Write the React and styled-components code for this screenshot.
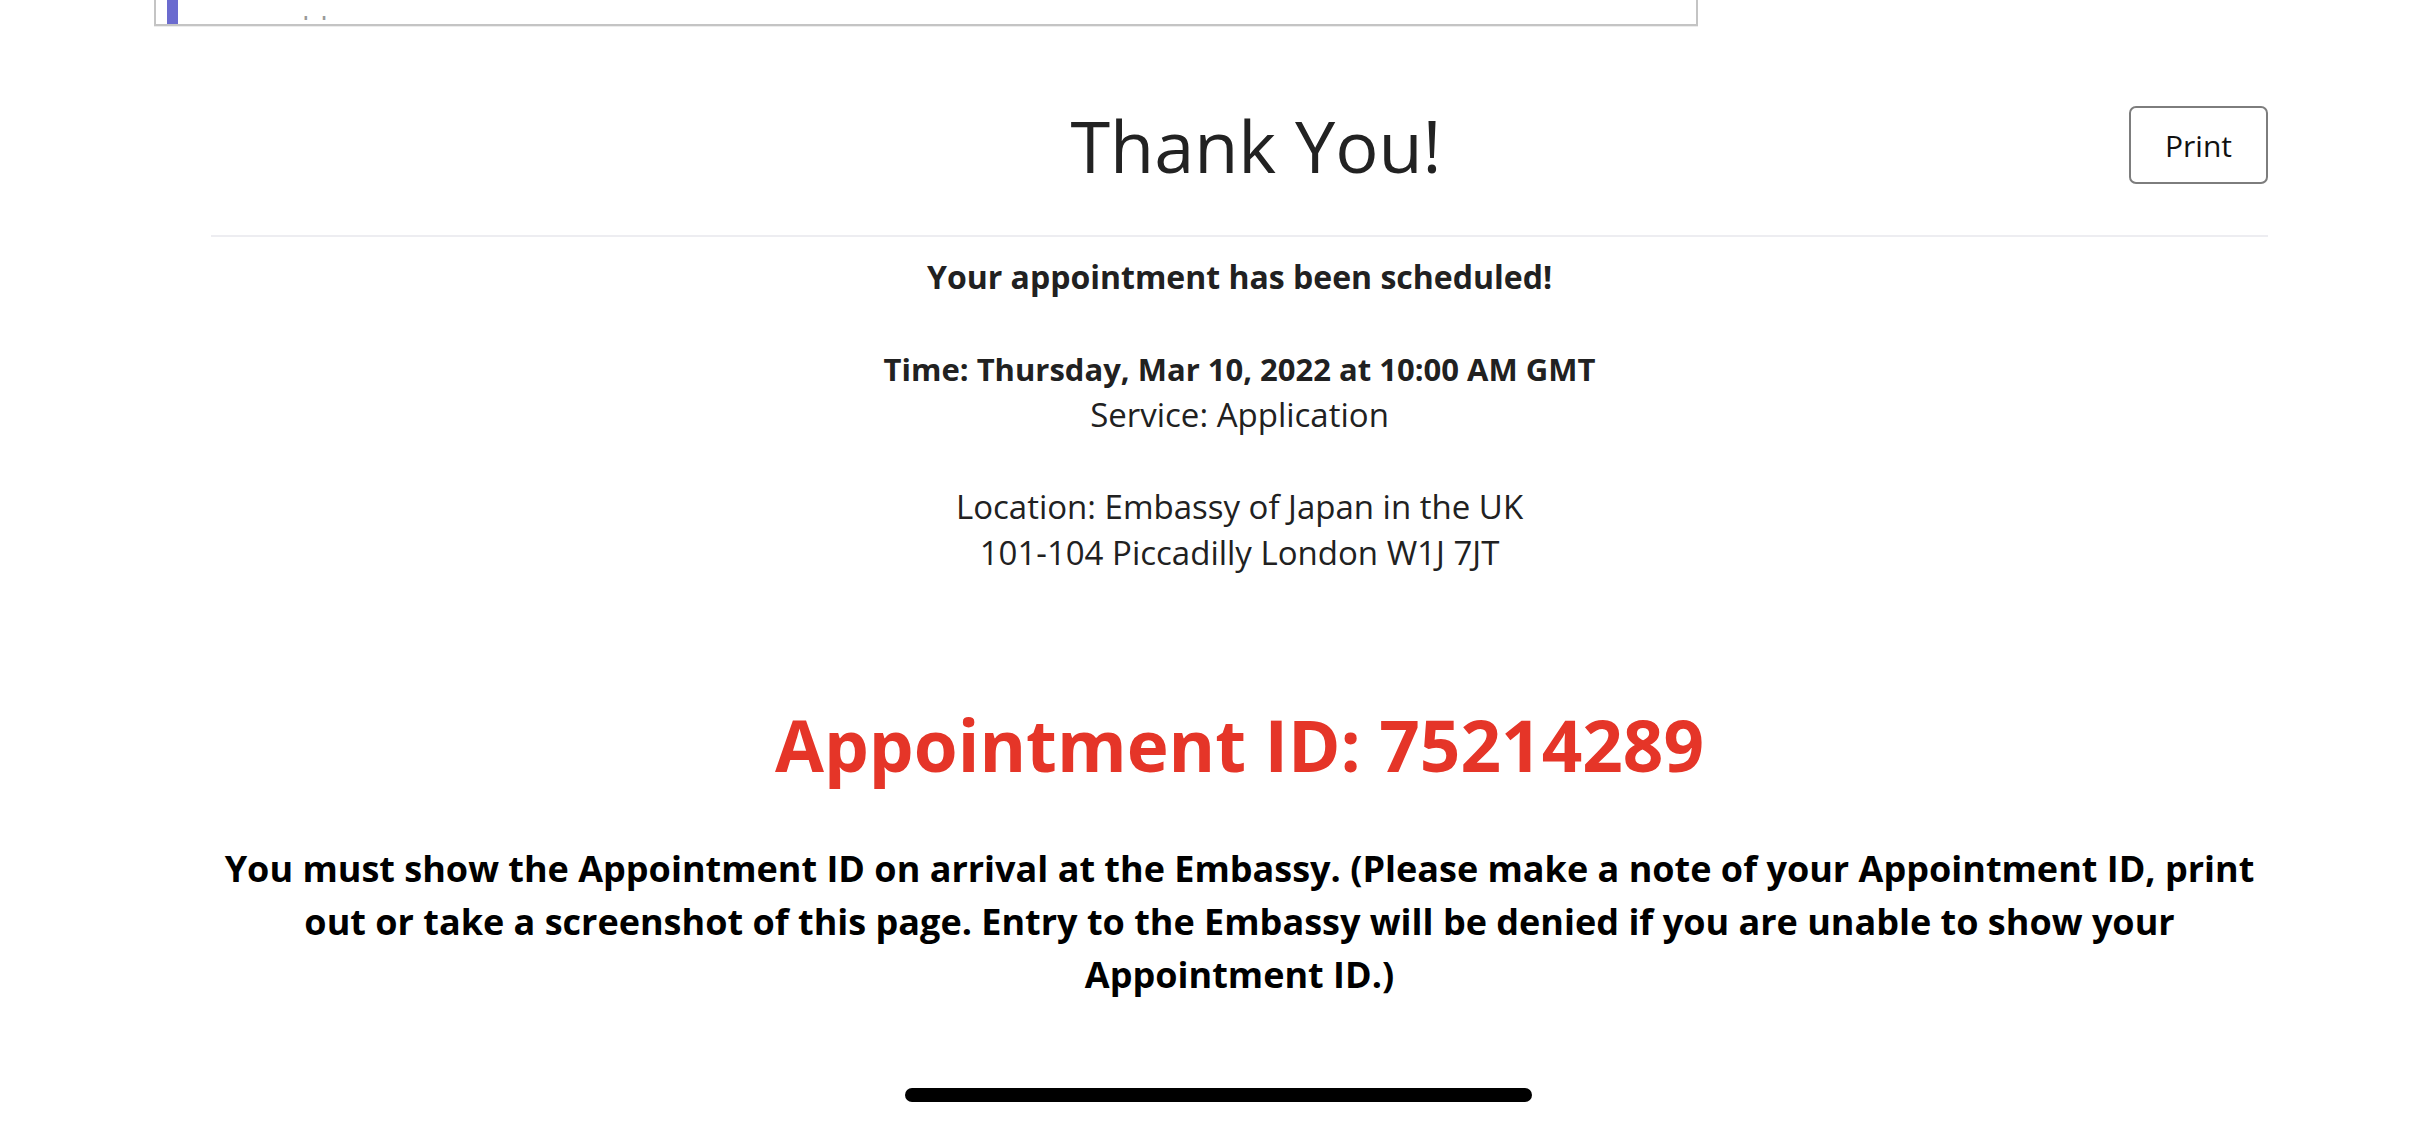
import { styled, createGlobalStyle } from "styled-components";

const GlobalStyle = createGlobalStyle`
    html, body {
        margin: 0;
        padding: 0;
        background: #ffffff;
        font-family: "Open Sans", "Noto Sans", sans-serif;
        color: #212121;
    }
`;

const Page = styled.div`
    position: relative;
    min-height: 1125px;
    overflow: hidden;
`;

const PrevCard = styled.div`
    display: flex;
    width: 1544px;
    height: 160px;
    margin: -134px 0 0 154px;
    box-sizing: border-box;
    border: 2px solid #c4c4c4;
    border-top: none;
    box-shadow: 0 1px 0 #ececec;
    padding-left: 11px;
`;

const AccentBar = styled.div`
    width: 11px;
    background: #6b6bcf;
`;

const PrevLabel = styled.div`
    align-self: flex-end;
    margin: 0 0 4px 105px;
    font-size: 30px;
    line-height: 30px;
    height: 4px;
    overflow: hidden;
    color: #9a9a9a;
    display: flex;
    align-items: flex-end;
`;

const Content = styled.main`
    margin-left: 211px;
    width: 2057px;
`;

const Header = styled.header`
    display: grid;
    grid-template-columns: 1fr auto 1fr;
    align-items: center;
    padding-top: 76px;
    padding-bottom: 47px;
    border-bottom: 2px solid #ededf1;
`;

const Title = styled.h1`
    grid-column: 2;
    margin: 0;
    padding-left: 33px;
    font-size: 72px;
    font-weight: 400;
    line-height: 1.2;
    color: #222222;
`;

const PrintButton = styled.button`
    grid-column: 3;
    justify-self: end;
    width: 139px;
    height: 78px;
    border: 2px solid #7d7d7d;
    border-radius: 7px;
    background: #ffffff;
    font-family: "Open Sans", sans-serif;
    font-size: 30px;
    color: #111111;
    cursor: pointer;
`;

const Details = styled.p`
    margin: 17px 0 0;
    text-align: center;
    font-size: 33px;
    line-height: 46px;
    color: #212121;
`;

const Strong = styled.strong`
    font-size: ${({ $size }) => $size || 32}px;
    font-weight: 700;
`;

const AppointmentId = styled.h2`
    margin: 116px 0 0;
    text-align: center;
    font-size: 71px;
    line-height: 106px;
    font-weight: 700;
    color: #e53528;
`;

const Notice = styled.p`
    margin: 44px 0 0;
    text-align: center;
    font-size: 36px;
    line-height: 53px;
    font-weight: 700;
    color: #000000;
`;

const HomeIndicator = styled.div`
    position: fixed;
    left: 50%;
    bottom: 23px;
    width: 627px;
    height: 14px;
    margin-left: -313px;
    border-radius: 7px;
    background: #000000;
`;

const App = () => (
    <Page>
        <GlobalStyle />
        <PrevCard>
            <AccentBar />
            <PrevLabel>Appointment</PrevLabel>
        </PrevCard>
        <Content>
            <Header>
                <Title>Thank You!</Title>
                <PrintButton>Print</PrintButton>
            </Header>
            <Details>
                <Strong>Your appointment has been scheduled!</Strong>
                <br />
                <br />
                <Strong $size={31}>Time: Thursday, Mar 10, 2022 at 10:00 AM GMT</Strong>
                <br />
                Service: Application
                <br />
                <br />
                Location: Embassy of Japan in the UK
                <br />
                101-104 Piccadilly London W1J 7JT
            </Details>
            <AppointmentId>Appointment ID: 75214289</AppointmentId>
            <Notice>
                You must show the Appointment ID on arrival at the Embassy. (Please make a note of your Appointment ID, print
                <br />
                out or take a screenshot of this page. Entry to the Embassy will be denied if you are unable to show your
                <br />
                Appointment ID.)
            </Notice>
        </Content>
        <HomeIndicator />
    </Page>
);

export default App;
